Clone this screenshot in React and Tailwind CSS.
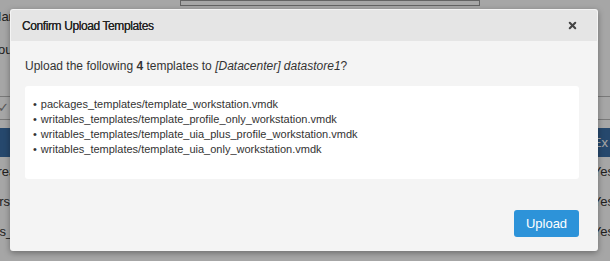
import { X } from "lucide-react";

const files = [
  "packages_templates/template_workstation.vmdk",
  "writables_templates/template_profile_only_workstation.vmdk",
  "writables_templates/template_uia_plus_profile_workstation.vmdk",
  "writables_templates/template_uia_only_workstation.vmdk",
];

const App = () => {
  return (
    <div className="relative h-[261px] w-[610px] overflow-hidden bg-white text-[#333] font-['Liberation_Sans',Arial,sans-serif]">
      {/* page behind the dialog */}
      <div className="flex flex-col text-[13px]">
        <div className="flex h-[34px] items-center gap-[150px] pl-0">
          <span className="-ml-[8px]">Name:</span>
          <div className="h-[6px] w-[300px] -mt-[28px] border border-[#999] bg-white" />
        </div>
        <div className="flex h-[32px] items-center">
          <span className="-ml-[10px]">Found:</span>
        </div>
        <div className="h-[30px]" />
        <div className="flex h-[24px] items-center border-y border-[#bbb] bg-white">
          <span className="ml-[-2px] text-[#888]">✓</span>
        </div>
        <div className="h-[8px]" />
        <div className="flex h-[29px] items-center justify-end bg-[#3b6fa8] pr-[2px] text-white">Ex</div>
        <div className="flex h-[30px] items-center justify-between px-0">
          <span className="-ml-[12px]">Creation</span>
          <span className="mr-[-4px]">Yes</span>
        </div>
        <div className="flex h-[30px] items-center justify-between">
          <span className="-ml-[16px]">Version</span>
          <span className="mr-[-4px]">Yes</span>
        </div>
        <div className="flex h-[30px] items-center justify-between">
          <span className="-ml-[4px]">ts_</span>
          <span className="mr-[-4px]">Yes</span>
        </div>
      </div>

      {/* overlay */}
      <div className="absolute inset-0 bg-black/35" />

      {/* dialog */}
      <div className="absolute left-[10px] top-[9px] flex h-[242px] w-[588px] flex-col rounded-[3px] bg-[#f4f4f4] p-[1px] shadow-[0_2px_6px_rgba(0,0,0,0.35)]">
        <div className="flex h-[31px] items-center justify-between rounded-t-[2px] bg-[#e5e5e5] pl-[11px] pr-[19px]">
          <span className="text-[12px] tracking-[-0.4px] text-[#222] [text-shadow:0_0_0.3px_#333]">Confirm Upload Templates</span>
          <X size={11} strokeWidth={4.5} className="text-[#444]" />
        </div>
        <div className="flex flex-1 flex-col pl-[14px] pr-[18px]">
          <p className="mt-[17px] text-[12px] leading-[16px] text-[#333]">
            Upload the following <b>4</b> templates to <i>[Datacenter] datastore1</i>?
          </p>
          <ul className="mt-[12px] h-[93px] rounded-[3px] bg-white pl-[8px] pt-[11px] text-[11px] leading-[15px] text-[#333]">
            {files.map((f) => (
              <li key={f} className="flex gap-[4px]">
                <span>•</span>
                <span>{f}</span>
              </li>
            ))}
          </ul>
          <div className="mt-[31px] flex justify-end">
            <button className="h-[27px] w-[65px] rounded-[3px] bg-[#2d93d9] text-[13px] text-white">Upload</button>
          </div>
        </div>
      </div>
    </div>
  );
};

export default App;
